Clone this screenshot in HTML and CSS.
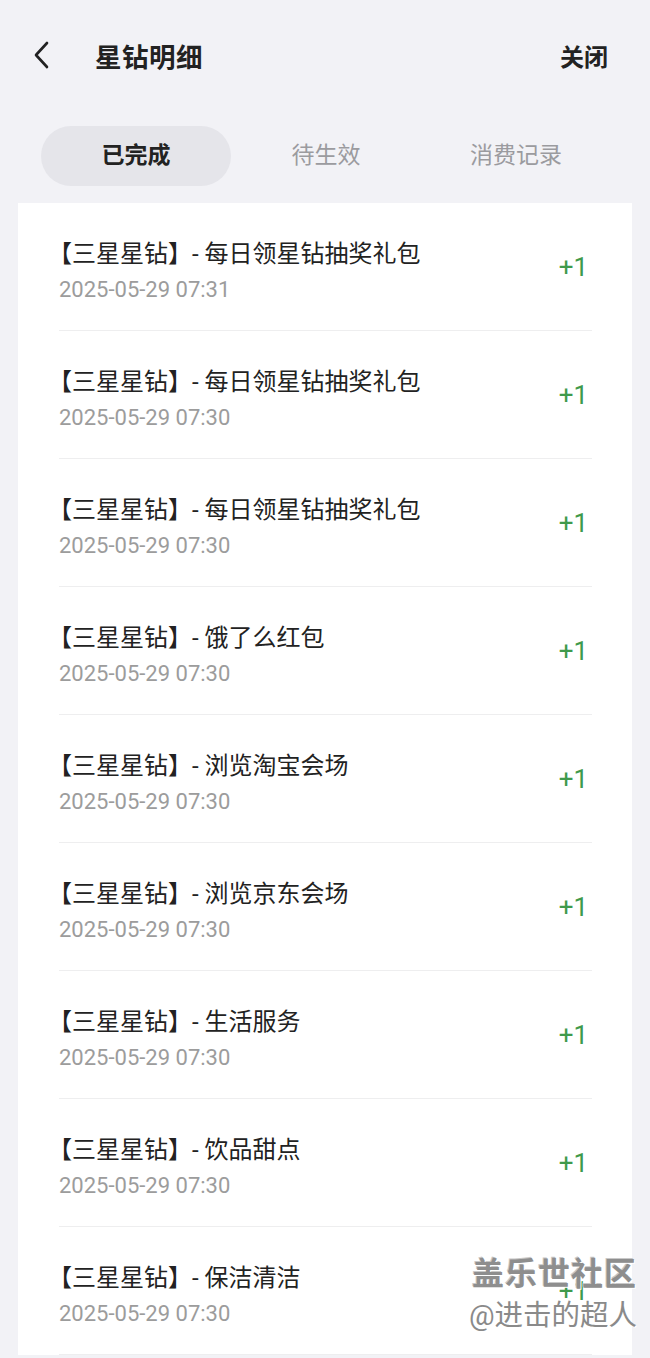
FILE: index.html
```html
<!DOCTYPE html>
<html lang="zh-CN">
<head>
    <meta charset="UTF-8">
    <meta name="viewport" content="width=device-width, initial-scale=1.0">
    <title>星钻明细</title>
    <link rel="stylesheet" href="styles.css">
</head>
<body>
    <div class="topbar">
        <a class="back">
            <svg width="18" height="28" viewBox="0 0 18 28"><path d="M15 2 L4 14 L15 26" fill="none" stroke="#222" stroke-width="2.6" stroke-linecap="round" stroke-linejoin="round"/></svg>
        </a>
        <h1 class="title">星钻明细</h1>
        <a class="close">关闭</a>
    </div>

    <div class="tabs">
        <a class="tab active">已完成</a>
        <a class="tab">待生效</a>
        <a class="tab">消费记录</a>
    </div>

    <div class="card">
        <div class="row">
            <div class="info">
                <div class="name">【三星星钻】- 每日领星钻抽奖礼包</div>
                <div class="time">2025-05-29 07:31</div>
            </div>
            <div class="amount">+1</div>
        </div>
        <div class="row">
            <div class="info">
                <div class="name">【三星星钻】- 每日领星钻抽奖礼包</div>
                <div class="time">2025-05-29 07:30</div>
            </div>
            <div class="amount">+1</div>
        </div>
        <div class="row">
            <div class="info">
                <div class="name">【三星星钻】- 每日领星钻抽奖礼包</div>
                <div class="time">2025-05-29 07:30</div>
            </div>
            <div class="amount">+1</div>
        </div>
        <div class="row">
            <div class="info">
                <div class="name">【三星星钻】- 饿了么红包</div>
                <div class="time">2025-05-29 07:30</div>
            </div>
            <div class="amount">+1</div>
        </div>
        <div class="row">
            <div class="info">
                <div class="name">【三星星钻】- 浏览淘宝会场</div>
                <div class="time">2025-05-29 07:30</div>
            </div>
            <div class="amount">+1</div>
        </div>
        <div class="row">
            <div class="info">
                <div class="name">【三星星钻】- 浏览京东会场</div>
                <div class="time">2025-05-29 07:30</div>
            </div>
            <div class="amount">+1</div>
        </div>
        <div class="row">
            <div class="info">
                <div class="name">【三星星钻】- 生活服务</div>
                <div class="time">2025-05-29 07:30</div>
            </div>
            <div class="amount">+1</div>
        </div>
        <div class="row">
            <div class="info">
                <div class="name">【三星星钻】- 饮品甜点</div>
                <div class="time">2025-05-29 07:30</div>
            </div>
            <div class="amount">+1</div>
        </div>
        <div class="row">
            <div class="info">
                <div class="name">【三星星钻】- 保洁清洁</div>
                <div class="time">2025-05-29 07:30</div>
            </div>
            <div class="amount">+1</div>
        </div>
    </div>

    <div class="watermark">
        <div class="wm-big">盖乐世社区</div>
        <div class="wm-small">@进击的超人</div>
    </div>
</body>
</html>
```

FILE: styles.css
```css
body { margin: 0; background-color: #f2f2f6; font-family: Roboto, "Noto Sans CJK SC", sans-serif; color: #222; height: 1358px; overflow: hidden; position: relative; }

.topbar { display: flex; align-items: center; height: 56px; padding: 27px 42px 0 32px; }
.back { display: flex; width: 18px; height: 28px; }
.title { margin: 0 0 0 45px; font-size: 26.5px; font-weight: 700; flex: 1; letter-spacing: 0.5px; }
.close { font-size: 24px; font-weight: 700; }

.tabs { display: flex; margin: 43px 39px 0 41px; }
.tab { flex: 1; height: 60px; line-height: 60px; text-align: center; font-size: 23px; color: #9b9b9f; border-radius: 30px; }
.tab.active { background-color: #e5e5ea; color: #222; font-weight: 700; }

.card { background: white; margin: 17px 18px 0 18px; padding: 0 40px 0 41px; }
.row { display: flex; align-items: center; height: 127px; border-bottom: 1px solid #eeeeef; }
.info { flex: 1; padding-top: 10px; }
.name { font-size: 24px; line-height: 36px; color: #222; margin-left: -11px; }
.time { font-size: 22px; line-height: 36px; color: #9c9c9c; }
.amount { font-size: 26px; color: #3f9a4c; margin: 0 4px 0 0; }

.watermark { position: absolute; right: 13px; top: 1254px; text-align: right; }
.wm-big { font-size: 32px; font-weight: 700; color: #8e8e8e; letter-spacing: 1px; line-height: 40px; text-shadow: 1px 1px 0 #fff, -1px -1px 0 #c8c8c8; }
.wm-small { font-size: 28.5px; color: #8a8a8a; line-height: 44px; text-shadow: 1px 1px 0 #fff; }
```
